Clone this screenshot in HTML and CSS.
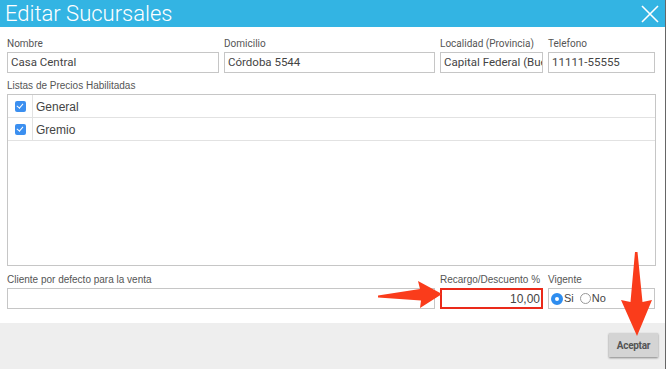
FILE: index.html
```html
<!DOCTYPE html>
<html lang="es">
<head>
    <meta charset="UTF-8">
    <title>Editar Sucursales</title>
    <link rel="stylesheet" href="styles.css">
</head>
<body>

    <div class="dialogo">
        <div class="cabecera">
            <span class="titulo">Editar Sucursales</span>
            <svg class="cerrar" width="18" height="18" viewBox="0 0 18 18">
                <path d="M1 1 L17 17 M17 1 L1 17" stroke="#fff" stroke-width="1.6" fill="none"/>
            </svg>
        </div>

        <div class="contenido">
            <div class="fila">
                <div class="campo">
                    <label>Nombre</label>
                    <div class="caja">Casa Central</div>
                </div>
                <div class="campo">
                    <label>Domicilio</label>
                    <div class="caja">Córdoba 5544</div>
                </div>
                <div class="campo">
                    <label>Localidad (Provincia)</label>
                    <div class="caja recorte">Capital Federal (Bue</div>
                </div>
                <div class="campo">
                    <label>Telefono</label>
                    <div class="caja">11111-55555</div>
                </div>
            </div>

            <label class="helv">Listas de Precios Habilitadas</label>
            <div class="lista">
                <div class="item">
                    <span class="check"><span class="tilde"></span></span>
                    <span class="nombre-item">General</span>
                </div>
                <div class="item">
                    <span class="check"><span class="tilde"></span></span>
                    <span class="nombre-item">Gremio</span>
                </div>
            </div>

            <div class="fila fila-baja">
                <div class="campo doble">
                    <label class="helv">Cliente por defecto para la venta</label>
                    <div class="caja"></div>
                </div>
                <div class="campo">
                    <label class="helv">Recargo/Descuento %</label>
                    <div class="caja marcada">10,00</div>
                </div>
                <div class="campo">
                    <label class="helv">Vigente</label>
                    <div class="caja radios">
                        <span class="radio activo"></span><span class="opcion">Si</span>
                        <span class="radio"></span><span class="opcion">No</span>
                    </div>
                </div>
            </div>
        </div>

        <div class="pie">
            <button class="aceptar">Aceptar</button>
        </div>
    </div>

    <svg class="flechas" width="668" height="369" viewBox="0 0 668 369">
        <polygon points="378,295.5 420,289 418,281 442,294 420,308 421,300.5 378,297.5" fill="#fa3c1b"/>
        <polygon points="635,252 637.5,252 642.5,302 652,300 637,336 621,300 630.5,302" fill="#fa3c1b"/>
    </svg>

</body>
</html>
```

FILE: styles.css
```css
body {
    margin: 0;
    padding: 0;
    background-color: #fff;
    font-family: Roboto, "Liberation Sans", sans-serif;
    color: #444;
}

.dialogo {
    width: 665px;
    height: 369px;
    border-right: 1px solid #666;
    display: flex;
    flex-direction: column;
}

.cabecera {
    height: 27px;
    background-color: #33b4e3;
    display: flex;
    align-items: center;
    justify-content: space-between;
    padding: 0 6px 0 5px;
}

.titulo {
    color: #fff;
    font-size: 22px;
    font-weight: 300;
    line-height: 27px;
}

.cerrar {
    margin-top: 1px;
}

.contenido {
    flex: 1;
    padding: 11px 0 0 7px;
}

.fila {
    display: grid;
    grid-template-columns: 212px 211px 103px 107px;
    column-gap: 5px;
    margin-bottom: 7px;
}

.fila-baja {
    margin-top: 8px;
}

.doble {
    grid-column: span 2;
}

label {
    display: block;
    font-size: 10px;
    line-height: 12px;
    color: #555;
    margin-bottom: 2px;
}

.helv {
    font-family: "Liberation Sans", Arial, sans-serif;
}

.caja {
    height: 19px;
    border: 1px solid #c6c6c6;
    font-size: 11.5px;
    line-height: 19px;
    padding-left: 3px;
    color: #444;
    white-space: nowrap;
    overflow: hidden;
}

.marcada {
    border: 2px solid #ea2a1a;
    height: 17px;
    line-height: 18px;
    text-align: right;
    padding-right: 1px;
    font-size: 12px;
    font-family: "Liberation Sans", Arial, sans-serif;
}

.radios {
    display: flex;
    align-items: center;
    padding-left: 2px;
    font-family: "Liberation Sans", Arial, sans-serif;
}

.radio {
    width: 11px;
    height: 11px;
    border: 1px solid #999;
    border-radius: 50%;
    background: #fff;
    box-sizing: border-box;
    margin-right: 1px;
}

.radio.activo {
    border: 4px solid #2e8def;
    background: #fff;
    width: 12px;
    height: 12px;
}

.opcion {
    margin-right: 6px;
    font-size: 11px;
}

.lista {
    width: 647px;
    height: 170px;
    border: 1px solid #c6c6c6;
    display: flex;
    flex-direction: column;
}

.item {
    display: flex;
    height: 22px;
    border-bottom: 1px solid #e2e2e2;
}

.check {
    width: 24px;
    border-right: 1px solid #e2e2e2;
    display: flex;
    align-items: center;
    justify-content: center;
}

.tilde {
    width: 11px;
    height: 11px;
    border-radius: 2px;
    background-color: #3b8ff0;
    position: relative;
}

.tilde::after {
    content: "";
    position: absolute;
    left: 3.5px;
    top: 1.5px;
    width: 2.5px;
    height: 5px;
    border: solid #fff;
    border-width: 0 1.5px 1.5px 0;
    transform: rotate(40deg);
}

.nombre-item {
    font-family: "Liberation Sans", Arial, sans-serif;
    font-size: 12px;
    line-height: 24px;
    padding-left: 3px;
    color: #444;
}

.pie {
    height: 46px;
    background-color: #eeeeee;
    display: flex;
    justify-content: flex-end;
    align-items: flex-start;
    padding: 10px 7px 0 0;
    box-sizing: border-box;
}

.aceptar {
    width: 49px;
    height: 24px;
    border: none;
    background-color: #d4d4d4;
    box-shadow: 0 1px 2px rgba(0, 0, 0, 0.45);
    font-family: Roboto, sans-serif;
    font-weight: 700;
    font-size: 10px;
    letter-spacing: -0.3px;
    color: #555;
    padding: 0;
}

.flechas {
    position: absolute;
    left: 0;
    top: 0;
    pointer-events: none;
}
```
